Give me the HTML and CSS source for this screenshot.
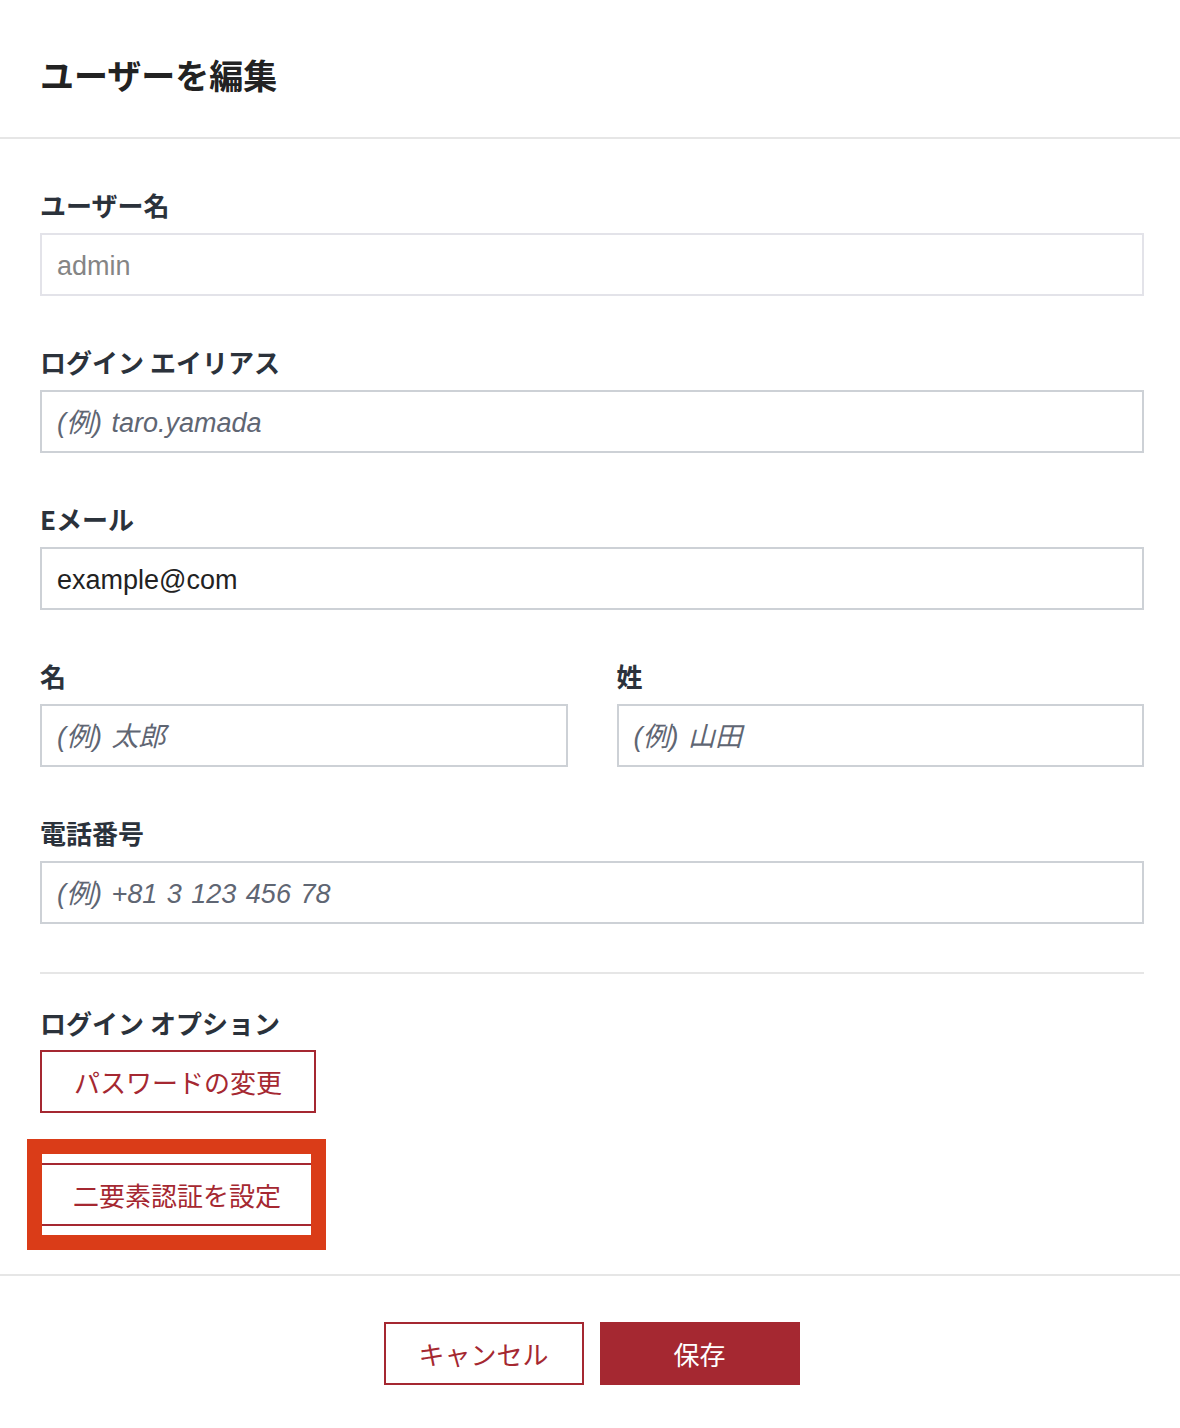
FILE: index.html
```html
<!DOCTYPE html>
<html lang="ja">
<head>
    <meta charset="UTF-8">
    <meta name="viewport" content="width=device-width, initial-scale=1.0">
    <title>ユーザーを編集</title>
    <link rel="stylesheet" href="styles.css">
</head>
<body>
    <div class="modal">
        <div class="modal-header">
            <h2>ユーザーを編集</h2>
        </div>

        <form class="modal-body" id="user-form">
            <div class="field">
                <label for="username">ユーザー名</label>
                <input type="text" id="username" value="admin" disabled>
            </div>

            <div class="field">
                <label for="alias">ログイン エイリアス</label>
                <input type="text" id="alias" placeholder="(例) taro.yamada">
            </div>

            <div class="field">
                <label for="email">Eメール</label>
                <input type="email" id="email" value="example@com">
            </div>

            <div class="field-row">
                <div class="field">
                    <label for="first-name">名</label>
                    <input type="text" id="first-name" placeholder="(例) 太郎">
                </div>
                <div class="field">
                    <label for="last-name">姓</label>
                    <input type="text" id="last-name" placeholder="(例) 山田">
                </div>
            </div>

            <div class="field">
                <label for="phone">電話番号</label>
                <input type="tel" id="phone" placeholder="(例) +81 3 123 456 78">
            </div>

            <hr class="divider">

            <div class="options">
                <label>ログイン オプション</label>
                <button type="button" class="btn btn-outline">パスワードの変更</button>
                <div class="highlight-wrap">
                    <button type="button" class="btn btn-outline">二要素認証を設定</button>
                    <div class="highlight"></div>
                </div>
            </div>
        </form>

        <div class="modal-footer">
            <button type="button" class="btn btn-outline btn-wide">キャンセル</button>
            <button type="submit" class="btn btn-primary btn-wide" form="user-form">保存</button>
        </div>
    </div>
</body>
</html>
```

FILE: styles.css
```css
/* Global styles */
body {
    margin: 0;
    padding: 0;
    background-color: #fff;
    font-family: "Noto Sans CJK JP", "Noto Sans", sans-serif;
    color: #222;
}

.modal {
    width: 1180px;
}

.modal-header {
    padding: 51px 40px 38px;
    border-bottom: 2px solid #e6e6e6;
}

.modal-header h2 {
    margin: 0;
    font-size: 34px;
    line-height: 48px;
    font-weight: bold;
    color: #222;
}

.modal-body {
    padding: 48px 36px 0 40px;
}

.field {
    margin-bottom: 48px;
}

label {
    display: block;
    font-size: 26px;
    line-height: 36px;
    font-weight: bold;
    color: #2b323b;
    margin-bottom: 10px;
}

input {
    display: block;
    width: 100%;
    height: 63px;
    box-sizing: border-box;
    padding: 4px 15px 0;
    border: 2px solid #cdd1d6;
    border-radius: 0;
    background: #fff;
    font-family: "Liberation Sans", "Noto Sans CJK JP", sans-serif;
    font-size: 27px;
    word-spacing: 2px;
    color: #222;
    outline: none;
}

input::placeholder {
    color: #5f6673;
    font-style: italic;
}

input:disabled {
    border-color: #e3e3e9;
    color: #858585;
    background: #fff;
}

.field-row {
    display: flex;
    gap: 49px;
}

.field-row .field {
    flex: 1;
}

.divider {
    margin: 0;
    border: none;
    border-top: 2px solid #e6e6e6;
}

.options {
    padding-top: 31px;
    padding-bottom: 48px;
}

.options label {
    margin-bottom: 9px;
}

.btn {
    display: block;
    height: 63px;
    box-sizing: border-box;
    padding: 0 32px;
    border: 2px solid #a52831;
    border-radius: 0;
    background: #fff;
    color: #a52831;
    font-family: "Noto Sans CJK JP", "Noto Sans", sans-serif;
    font-size: 26px;
    white-space: nowrap;
    cursor: pointer;
}

.btn-primary {
    background: #a52831;
    color: #fff;
}

.btn-wide {
    width: 200px;
    padding: 0;
}

/* annotation frame drawn over the two-factor button */
.highlight-wrap {
    position: relative;
    margin-top: 50px;
    width: 274px;
}

.highlight-wrap .btn {
    width: 274px;
    padding: 0;
}

.highlight {
    position: absolute;
    top: -24px;
    left: -13px;
    width: 299px;
    height: 111px;
    box-sizing: border-box;
    border: 15px solid #da3c18;
    pointer-events: none;
}

.modal-footer {
    display: flex;
    justify-content: center;
    gap: 16px;
    padding: 46px 0 43px 3px;
    border-top: 2px solid #e6e6e6;
}
```
